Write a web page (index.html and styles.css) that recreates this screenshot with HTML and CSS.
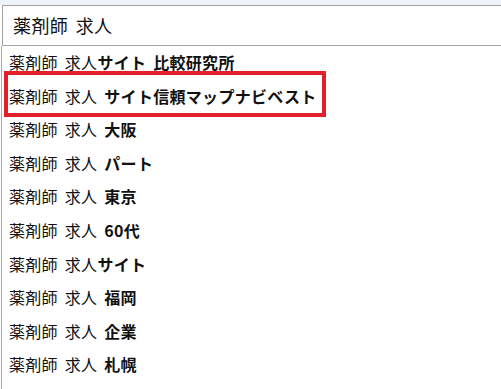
FILE: index.html
```html
<!DOCTYPE html>
<html>
<head>
  <meta charset='UTF-8'>
  <title>薬剤師 求人</title>
  <link rel="stylesheet" href="styles.css">
</head>
<body>

  <div class='caja'>
    <div class='entrada'>薬剤師 求人</div>
    <ul class='lista'>
      <li>薬剤師 求人<b>サイト 比較研究所</b></li>
      <li>薬剤師 求人 <b>サイト信頼マップナビベスト</b></li>
      <li>薬剤師 求人 <b>大阪</b></li>
      <li>薬剤師 求人 <b>パート</b></li>
      <li>薬剤師 求人 <b>東京</b></li>
      <li>薬剤師 求人 <b>60代</b></li>
      <li>薬剤師 求人<b>サイト</b></li>
      <li>薬剤師 求人 <b>福岡</b></li>
      <li>薬剤師 求人 <b>企業</b></li>
      <li>薬剤師 求人 <b>札幌</b></li>
    </ul>
    <div class='marca'></div>
  </div>

</body>
</html>
```

FILE: styles.css
```css
body { margin: 0; background: #fff; font-family: "Noto Sans CJK JP", "Noto Sans", sans-serif; color: #111; }
.caja { position: relative; height: 389px; overflow: hidden; padding-top: 5px; box-sizing: border-box; background: linear-gradient(#eef3fa 0, #eef3fa 5px, #fff 5px); }
.entrada { height: 39px; margin-left: 2px; border: 1px solid #a3a3a3; border-right: none; padding-left: 10px; font-size: 18px; line-height: 39px; word-spacing: 3px; letter-spacing: 0.4px; background: #fff; }
.lista { list-style: none; margin: 0 0 0 1px; padding: 0; border-left: 1px solid #a8a8a8; height: 345px; }
.lista li { height: 33.6px; line-height: 33.6px; padding-left: 7px; font-size: 16px; word-spacing: 3px; letter-spacing: 0.3px; white-space: nowrap; }
.lista b { font-weight: bold; }
.marca { position: absolute; left: 4px; top: 71px; width: 314px; height: 38px; border: 4px solid #e2202b; }
```
